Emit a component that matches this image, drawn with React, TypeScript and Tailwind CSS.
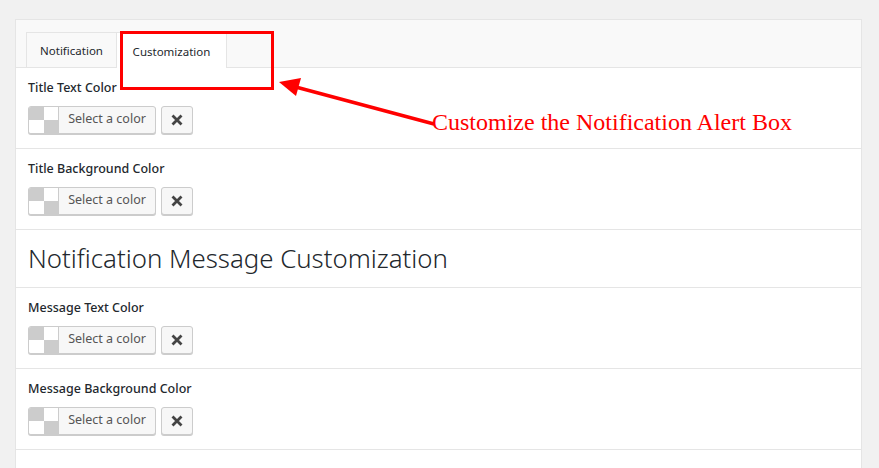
import React from 'react';

const font = { fontFamily: '"Noto Sans", "Open Sans", sans-serif' };

const ColorPicker: React.FC = () => (
  <div className="flex items-center gap-[5px]">
    <button className="flex h-[28px] w-[128px] overflow-hidden rounded-[3px] border border-[#cccccc] bg-[#f7f7f7] shadow-[0_1px_0_#cccccc]">
      <span className="grid h-full w-[30px] shrink-0 grid-cols-2 grid-rows-2 border-r border-[#cccccc]">
        <span className="bg-[#cccccc]" />
        <span className="bg-white" />
        <span className="bg-white" />
        <span className="bg-[#cccccc]" />
      </span>
      <span className="flex flex-1 items-center justify-center text-[12.5px] text-[#555555]">Select a color</span>
    </button>
    <button className="flex h-[28px] w-[32px] items-center justify-center rounded-[3px] border border-[#cccccc] bg-[#f7f7f7] shadow-[0_1px_0_#cccccc]">
      <svg width="12" height="12" viewBox="0 0 12 12">
        <path d="M1.5 1.5 L10.5 10.5 M10.5 1.5 L1.5 10.5" stroke="#444" strokeWidth="2.8" />
      </svg>
    </button>
  </div>
);

const Row: React.FC<{ label: string }> = ({ label }) => (
  <div className="flex h-[81px] flex-col gap-[8px] border-b border-[#e5e5e5] px-[12px] pt-[11px]">
    <div className="text-[12.5px] font-medium text-[#23282d]">{label}</div>
    <ColorPicker />
  </div>
);

export default function App() {
  return (
    <div className="relative min-h-[468px] bg-[#f1f1f1] pl-[15px] pr-[17px] pt-[19px]" style={font}>
      <div className="h-[449px] border border-b-0 border-[#e5e5e5] bg-white">
        <div className="flex h-[48px] items-end border-b border-[#e5e5e5] bg-[#f9f9f9] pl-[10px]">
          <div className="-mb-px flex h-[36px] w-[91px] items-center justify-center border border-[#e5e5e5] bg-[#f9f9f9] pt-[2px] text-[11.5px] text-[#23282d]">
            Notification
          </div>
          <div className="-mb-px flex h-[36px] w-[110px] items-center justify-center border border-l-0 border-b-0 border-[#e5e5e5] bg-white pt-[2px] text-[11.5px] text-[#23282d]">
            Customization
          </div>
        </div>
        <Row label="Title Text Color" />
        <Row label="Title Background Color" />
        <div className="flex h-[58px] items-center border-b border-[#e5e5e5] px-[12px]">
          <h2 className="text-[25.8px] font-light text-[#23282d]">Notification Message Customization</h2>
        </div>
        <Row label="Message Text Color" />
        <Row label="Message Background Color" />
      </div>

      {/* annotation */}
      <div className="absolute left-[120px] top-[31px] h-[59px] w-[154px] border-[3px] border-[#ff0000]" />
      <svg className="absolute left-0 top-0" width="879" height="468">
        <line x1="434" y1="124" x2="292" y2="86" stroke="#ff0000" strokeWidth="3.5" />
        <polygon points="279,82 301,78 296,96" fill="#ff0000" />
      </svg>
      <div
        className="absolute left-[432px] top-[110px] text-[24px] leading-none text-[#ff0000]"
        style={{ fontFamily: '"Liberation Serif", serif' }}
      >
        Customize the Notification Alert Box
      </div>
    </div>
  );
}
